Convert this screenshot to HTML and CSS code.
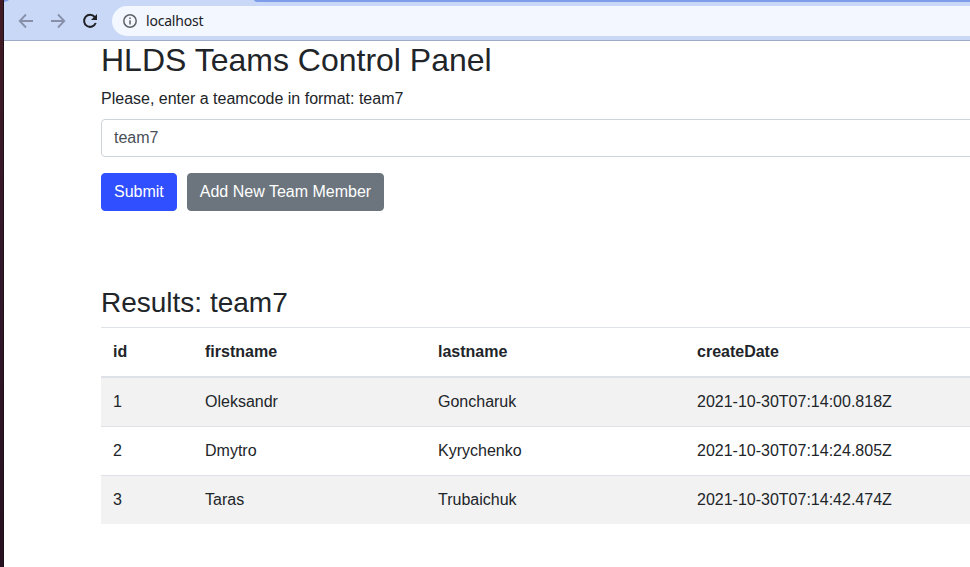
FILE: index.html
```
<!DOCTYPE html>
<html lang="en">
<head>
<meta charset="utf-8">
<title>HLDS Teams Control Panel</title>
<link rel="stylesheet" href="styles.css">
</head>
<body>
<div class="dock"></div>
<div class="window">
  <div class="toolbar">
    <svg class="corner" width="5" height="2" viewBox="0 0 5 2"><path d="M0 0h5Q3.5 1.7 0 2Z" fill="#7d9cea"/></svg>
    <div class="tabstrip"></div>
    <svg class="nav" width="16" height="16" viewBox="0 0 16 16"><path d="M15 8H2.200M8 1.500 1.700 8 8 14.500" /></svg>
    <svg class="nav" width="16" height="16" viewBox="0 0 16 16"><path d="M1 8h12.800M8 1.500 14.300 8 8 14.500" /></svg>
    <svg class="nav reload" width="16" height="16" viewBox="0 0 16 16"><path d="M12.700 4A6 6 0 1 0 13.700 10"/><path class="head" d="M15 1v6H9Z"/></svg>
    <div class="address">
      <svg class="info" width="14" height="14" viewBox="0 0 14 14"><circle cx="7" cy="7" r="6.200"/><path d="M7 6.300v4.200M7 3.500v1.500"/></svg>
      <span class="url">localhost</span>
    </div>
  </div>
  <main class="page">
    <h2>HLDS Teams Control Panel</h2>
    <form>
      <label for="code">Please, enter a teamcode in format: team7</label>
      <input id="code" type="text" value="team7">
      <div class="actions">
        <button type="button" class="btn primary">Submit</button>
        <button type="button" class="btn secondary">Add New Team Member</button>
      </div>
    </form>
    <h3>Results: team7</h3>
    <table>
      <colgroup><col class="c-id"><col class="c-first"><col class="c-last"><col></colgroup>
      <thead><tr><th>id</th><th>firstname</th><th>lastname</th><th>createDate</th></tr></thead>
      <tbody>
        <tr><td>1</td><td>Oleksandr</td><td>Goncharuk</td><td>2021-10-30T07:14:00.818Z</td></tr>
        <tr><td>2</td><td>Dmytro</td><td>Kyrychenko</td><td>2021-10-30T07:14:24.805Z</td></tr>
        <tr><td>3</td><td>Taras</td><td>Trubaichuk</td><td>2021-10-30T07:14:42.474Z</td></tr>
      </tbody>
    </table>
  </main>
</div>
</body>
</html>
```
FILE: styles.css
```
* { box-sizing: border-box; }
body {
  margin: 0;
  height: 567px;
  display: flex;
  overflow: hidden;
  background: #fff;
  color: #212529;
  font: 16px/1.5 "Liberation Sans", Arial, sans-serif;
}
.dock {
  flex: 0 0 4px;
  background: linear-gradient(#421b24, #32172a 45%, #271221);
  border-right: 1px solid #1d1018;
}
.window { flex: 1; min-width: 0; overflow: hidden; }
.toolbar {
  position: relative;
  display: flex;
  align-items: center;
  height: 41px;
  padding: 1px 0 0 14px;
  background: #c9d8f7;
  border-bottom: 1px solid #9faac7;
}
.corner { position: absolute; left: 0; top: 0; }
.tabstrip {
  position: absolute;
  left: 250px;
  right: 0;
  top: 0;
  height: 2px;
  background: #7d9cea;
  border-bottom-left-radius: 5px 2px;
}
.nav { flex: none; margin-right: 16px; fill: none; stroke: #8790a8; stroke-width: 1.8; }
.reload { margin-right: 14px; stroke: #202124; stroke-width: 2; }
.reload .head { fill: #202124; stroke: none; }
.address {
  flex: 1;
  display: flex;
  align-items: center;
  height: 30px;
  padding-left: 11px;
  background: #f3f7ff;
  border-radius: 15px 0 0 15px;
}
.info { fill: none; stroke: #5f6368; stroke-width: 1.5; }
.url {
  margin-left: 9px;
  color: #202124;
  font: 14px/20px "Noto Sans", sans-serif;
  letter-spacing: -0.2px;
}
.page { padding-left: 97px; width: 1100px; }
h2, h3 { margin: 0 0 8px; font-weight: 400; line-height: 1.2; }
h2 { font-size: 32px; }
h3 { margin-bottom: 7.5px; font-size: 28px; }
label { display: block; margin-bottom: 8px; }
input {
  display: block;
  width: 100%;
  height: 38px;
  padding: 6px 12px;
  border: 1px solid #ced4da;
  border-radius: 4px;
  background: #fff;
  color: #495057;
  font: inherit;
}
.actions { display: flex; gap: 10px; margin: 16px 0 74.6px; }
.btn {
  height: 38px;
  padding: 6px 12px;
  border: 1px solid transparent;
  border-radius: 4px;
  color: #fff;
  font: inherit;
}
.primary { background: #304ffe; border-color: #304ffe; }
.secondary { background: #6c757d; border-color: #6c757d; }
table { width: 100%; table-layout: fixed; border-collapse: collapse; }
.c-id { width: 92px; }
.c-first { width: 233px; }
.c-last { width: 259px; }
th, td { padding: 12px; border-top: 1px solid #dee2e6; text-align: left; vertical-align: top; }
th { border-bottom: 2px solid #dee2e6; }
tbody tr:nth-child(odd) { background: #f2f2f2; }
```
